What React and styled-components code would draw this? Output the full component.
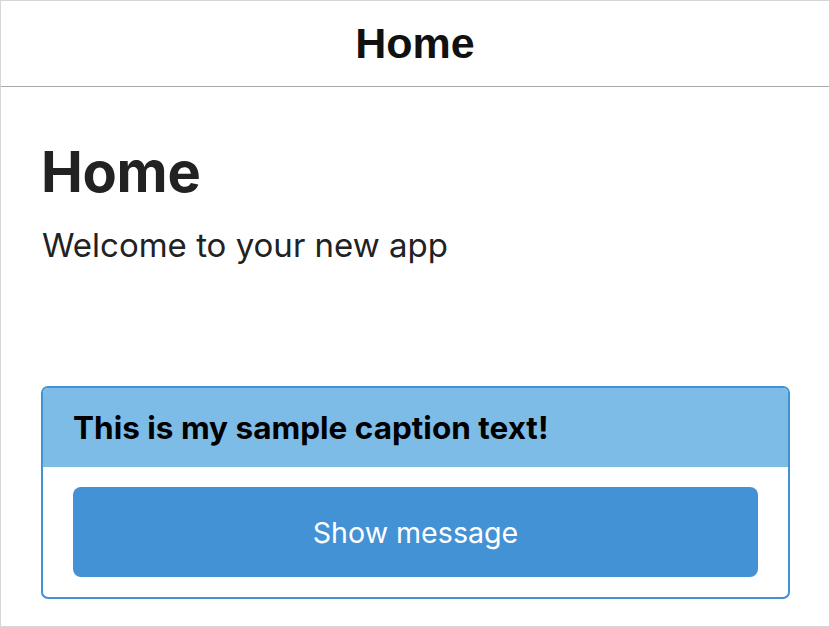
import React from "react";
import styled, { createGlobalStyle } from "styled-components";

const GlobalStyle = createGlobalStyle`
  html, body {
    margin: 0;
    padding: 0;
    background: #ffffff;
  }
  * { box-sizing: border-box; }
`;

const Frame = styled.div`
  width: 830px;
  height: 627px;
  border: 1px solid #d6d6d6;
  display: flex;
  flex-direction: column;
  background: #ffffff;
  font-family: Inter, "Noto Sans", sans-serif;
`;

const NavBar = styled.header`
  height: 86px;
  flex: 0 0 auto;
  border-bottom: 1px solid #a9a9a9;
  display: flex;
  align-items: center;
  justify-content: center;
`;

const NavTitle = styled.h2`
  margin: 0;
  font-family: "Liberation Sans", Arial, sans-serif;
  font-weight: 700;
  font-size: 43px;
  line-height: 1;
  color: #111111;
`;

const Content = styled.main`
  padding: 51px 39px 0 40px;
  display: flex;
  flex-direction: column;
`;

const Heading = styled.h1`
  margin: 0;
  font-size: 56px;
  font-weight: 700;
  line-height: 68px;
  color: #222222;
  letter-spacing: -0.3px;
`;

const Lead = styled.p`
  margin: 19px 0 0 1px;
  font-size: 33px;
  font-weight: 400;
  line-height: 40px;
  color: #222222;
`;

const Card = styled.section`
  margin-top: 121px;
  border: 2px solid #4390d5;
  border-radius: 7px;
  overflow: hidden;
`;

const CardHeader = styled.div`
  height: 79px;
  background: #7ebce8;
  display: flex;
  align-items: center;
  padding-left: 30px;
`;

const Caption = styled.h3`
  margin: 0;
  font-size: 31.5px;
  font-weight: 700;
  color: #000000;
  line-height: 1;
`;

const CardBody = styled.div`
  padding: 20px 30px;
`;

const ActionButton = styled.button`
  width: 100%;
  height: 90px;
  border: none;
  border-radius: 8px;
  background: #4392d5;
  color: #ffffff;
  font-family: Inter, "Noto Sans", sans-serif;
  font-size: 28.6px;
  font-weight: 400;
  cursor: pointer;
`;

export default function App() {
  return (
    <>
      <GlobalStyle />
      <Frame>
        <NavBar>
          <NavTitle>Home</NavTitle>
        </NavBar>
        <Content>
          <Heading>Home</Heading>
          <Lead>Welcome to your new app</Lead>
          <Card>
            <CardHeader>
              <Caption>This is my sample caption text!</Caption>
            </CardHeader>
            <CardBody>
              <ActionButton>Show message</ActionButton>
            </CardBody>
          </Card>
        </Content>
      </Frame>
    </>
  );
}
